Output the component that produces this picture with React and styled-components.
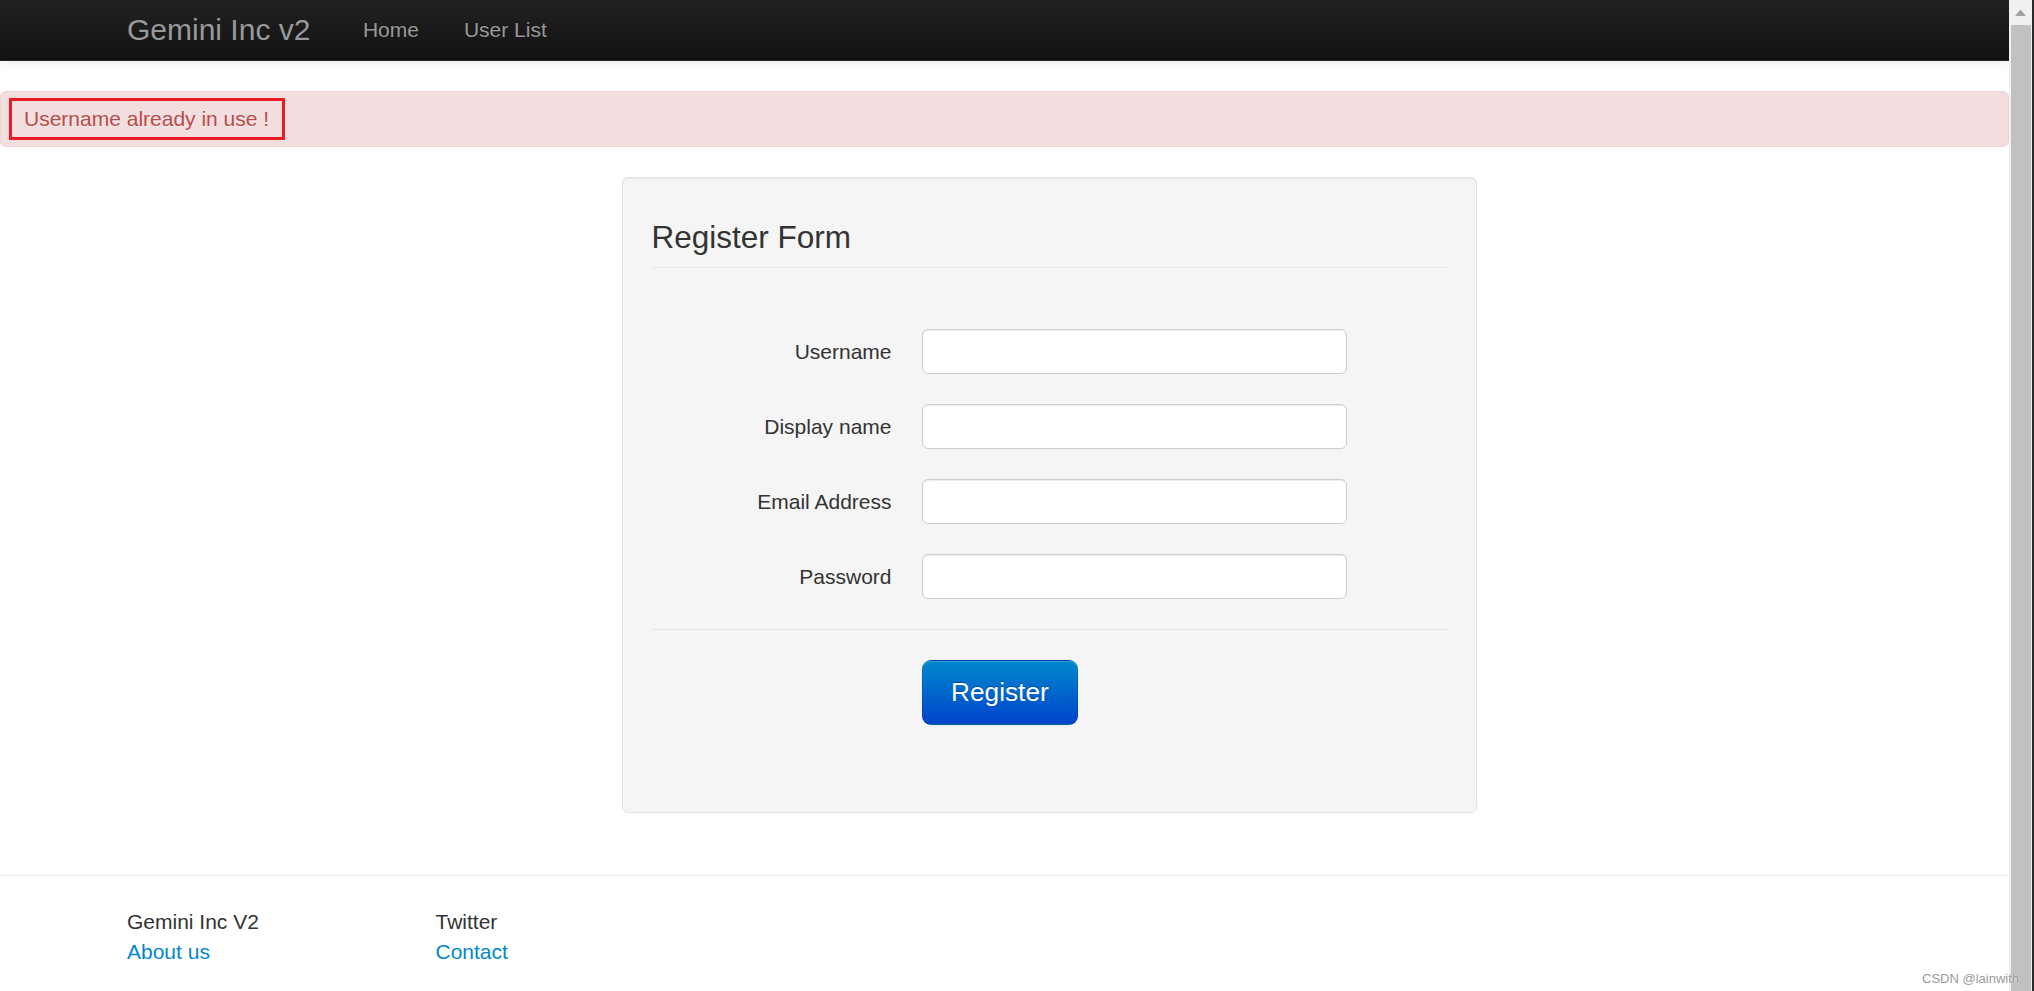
import React from "react";
import styled, { createGlobalStyle } from "styled-components";

const GlobalStyle = createGlobalStyle`
	html, body {
		margin: 0;
		padding: 0;
		height: 100%;
		overflow: hidden;
	}
	body {
		font-family: "Liberation Sans", Arial, Helvetica, sans-serif;
		font-size: 21px;
		line-height: 30px;
		color: #333;
		background: #fff;
	}
	* {
		box-sizing: border-box;
	}
`;

const Window = styled.div`
	position: relative;
	display: flex;
	height: 100vh;
`;

const Page = styled.div`
	flex: 1;
	min-width: 0;
	overflow: hidden;
`;

// browser scrollbar as seen in the screenshot
const ScrollBar = styled.div`
	width: 25px;
	display: flex;
	flex-direction: column;
	background: #f0f0f0;
	border-right: 2px solid #2b2b2b;
`;

const ScrollArrow = styled.div`
	height: 25px;
	display: flex;
	align-items: center;
	justify-content: center;
`;

const ScrollThumb = styled.div`
	flex: 1;
	margin: 0 1px 0 2px;
	background: #c1c1c1;
`;

// watermark stamped on the screenshot
const Watermark = styled.div`
	position: absolute;
	right: 15px;
	bottom: 4px;
	font-family: "Liberation Sans", Arial, sans-serif;
	font-size: 13px;
	line-height: 16px;
	color: #9a9a9a;
	text-shadow: 0 0 2px rgba(255, 255, 255, 0.9);
	pointer-events: none;
`;

const Navbar = styled.header`
	position: relative;
	z-index: 10;
	height: 61px;
	background: linear-gradient(to bottom, #222222, #111111);
	border-bottom: 1px solid #252525;
	box-shadow: 0 1px 10px rgba(0, 0, 0, 0.1);
`;

const Container = styled.div`
	width: 1755px;
	margin: 0 auto;
`;

const NavInner = styled(Container)`
	display: flex;
	align-items: center;
`;

const Brand = styled.a`
	display: block;
	margin-left: -30px;
	padding: 15px 30px;
	font-size: 30px;
	line-height: 30px;
	color: #999;
	text-decoration: none;
`;

const NavList = styled.nav`
	display: flex;
`;

const NavLink = styled.a`
	display: block;
	padding: 15px 22.5px;
	color: #999;
	text-decoration: none;
	text-shadow: 0 -1px 0 rgba(0, 0, 0, 0.25);
`;

const Alert = styled.div`
	margin: 30px 0 30px;
	padding: 12px 52.5px 12px 21px;
	background: #f2dede;
	border: 1px solid #eed3d7;
	border-radius: 6px;
	color: #b94a48;
	text-shadow: 0 1px 0 rgba(255, 255, 255, 0.5);
`;

// red box drawn around the message in the screenshot
const Marked = styled.span`
	display: inline-block;
	margin: -6px 0 -6px -13px;
	padding: 3px 13px 3px 12px;
	border: 3px solid #ed1c24;
`;

const Row = styled(Container)`
	display: grid;
	grid-template-columns: 495px 855px;
`;

const Well = styled.div`
	grid-column: 2;
	padding: 28.5px;
	background: #f5f5f5;
	border: 1px solid #e3e3e3;
	border-radius: 6px;
	box-shadow: inset 0 1px 1px rgba(0, 0, 0, 0.05);
`;

const Legend = styled.h2`
	margin: 0 0 61.5px;
	font-size: 31.5px;
	font-weight: normal;
	line-height: 60px;
	color: #333;
	border-bottom: 1px solid #e5e5e5;
`;

const Form = styled.form`
	display: flex;
	flex-direction: column;
	gap: 30px;
	margin: 0 0 30px;
`;

const ControlGroup = styled.div`
	display: grid;
	grid-template-columns: 240px 1fr;
	column-gap: 30px;
`;

const Label = styled.label`
	padding-top: 7.5px;
	text-align: right;
`;

const Input = styled.input`
	width: 425px;
	height: 45px;
	padding: 6px 9px;
	font: inherit;
	color: #555;
	background: #fff;
	border: 1px solid #ccc;
	border-radius: 6px;
	box-shadow: inset 0 1px 1px rgba(0, 0, 0, 0.075);
	outline: none;
`;

const FormActions = styled.div`
	padding: 29.5px 30px 29px 270px;
	background: #f5f5f5;
	border-top: 1px solid #e5e5e5;
`;

const Button = styled.button`
	display: inline-block;
	padding: 16.5px 28.5px;
	font-family: inherit;
	font-size: 26.25px;
	line-height: 30px;
	color: #fff;
	text-shadow: 0 -1px 0 rgba(0, 0, 0, 0.25);
	background: linear-gradient(to bottom, #0088cc, #0044cc);
	border: 1px solid;
	border-color: rgba(0, 0, 0, 0.1) rgba(0, 0, 0, 0.1) rgba(0, 0, 0, 0.25);
	border-radius: 9px;
	box-shadow: inset 0 1px 0 rgba(255, 255, 255, 0.2), 0 1px 2px rgba(0, 0, 0, 0.05);
	cursor: pointer;
`;

const Rule = styled.hr`
	margin: 61.5px 0 30px;
	border: 0;
	border-top: 1px solid #eee;
	border-bottom: 1px solid #fff;
`;

const Footer = styled(Container)`
	display: grid;
	grid-template-columns: 308.5px auto;
	justify-content: start;
	padding-bottom: 30px;
`;

const FooterCol = styled.div`
	display: flex;
	flex-direction: column;
`;

const FooterLink = styled.a`
	color: #0088cc;
	text-decoration: none;
`;

const fields = [
	{ id: "username", label: "Username", type: "text" },
	{ id: "displayname", label: "Display name", type: "text" },
	{ id: "email", label: "Email Address", type: "email" },
	{ id: "password", label: "Password", type: "password" },
];

export default function App() {
	return (
		<>
			<GlobalStyle />
			<Window>
				<Page>
					<Navbar>
						<NavInner>
							<Brand href="#">Gemini Inc v2</Brand>
							<NavList>
								<NavLink href="#">Home</NavLink>
								<NavLink href="#">User List</NavLink>
							</NavList>
						</NavInner>
					</Navbar>

					<Alert>
						<Marked>Username already in use !</Marked>
					</Alert>

					<Row>
						<Well>
							<Legend>Register Form</Legend>
							<Form onSubmit={(e) => e.preventDefault()}>
								{fields.map((f) => (
									<ControlGroup key={f.id}>
										<Label htmlFor={f.id}>{f.label}</Label>
										<Input id={f.id} name={f.id} type={f.type} />
									</ControlGroup>
								))}
								<FormActions>
									<Button type="submit">Register</Button>
								</FormActions>
							</Form>
						</Well>
					</Row>

					<Rule />

					<Footer>
						<FooterCol>
							<span>Gemini Inc V2</span>
							<FooterLink href="#">About us</FooterLink>
						</FooterCol>
						<FooterCol>
							<span>Twitter</span>
							<FooterLink href="#">Contact</FooterLink>
						</FooterCol>
					</Footer>
				</Page>

				<ScrollBar>
					<ScrollArrow>
						<svg width="11" height="7" viewBox="0 0 11 7">
							<path d="M0 7 L5.5 0.5 L11 7 Z" fill="#a3a3a3" />
						</svg>
					</ScrollArrow>
					<ScrollThumb />
				</ScrollBar>

				<Watermark>CSDN @lainwith</Watermark>
			</Window>
		</>
	);
}
